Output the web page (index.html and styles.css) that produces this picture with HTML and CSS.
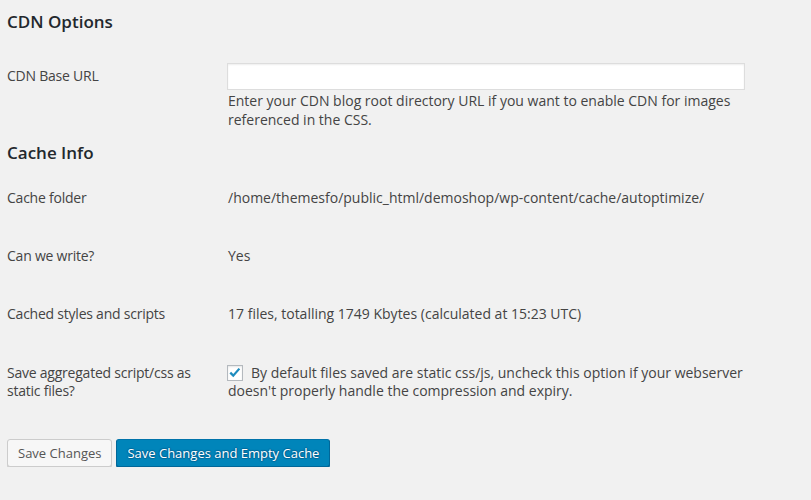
FILE: index.html
```html
<!DOCTYPE html>
<html>
<head>
<meta charset="utf-8">
<link rel="stylesheet" href="styles.css">
</head>
<body>
<div class="wrap">
  <h2 class="section-title first">CDN Options</h2>
  <table class="form-table">
    <tr>
      <th>CDN Base URL</th>
      <td class="input-cell">
        <span class="text-input"></span>
        <p class="description">Enter your CDN blog root directory URL if you want to enable CDN for images referenced in the CSS.</p>
      </td>
    </tr>
  </table>
  <h2 class="section-title">Cache Info</h2>
  <table class="form-table">
    <tr>
      <th>Cache folder</th>
      <td>/home/themesfo/public_html/demoshop/wp-content/cache/autoptimize/</td>
    </tr>
    <tr>
      <th>Can we write?</th>
      <td>Yes</td>
    </tr>
    <tr>
      <th>Cached styles and scripts</th>
      <td>17 files, totalling 1749 Kbytes (calculated at 15:23 UTC)</td>
    </tr>
    <tr>
      <th>Save aggregated script/css as static files?</th>
      <td><span class="checkbox"><svg viewBox="0 0 16 16" width="14" height="14"><path d="M2.6 7.6 L6 11 L13 3" fill="none" stroke="#1e8cbe" stroke-width="2.6" stroke-linecap="butt" stroke-linejoin="miter"/></svg></span>By default files saved are static css/js, uncheck this option if your webserver doesn't properly handle the compression and expiry.</td>
    </tr>
  </table>
  <div class="submit">
    <button class="button">Save Changes</button>
    <button class="button button-primary">Save Changes and Empty Cache</button>
  </div>
</div>
</body>
</html>
```
FILE: styles.css
```css
html, body {
  margin: 0;
  padding: 0;
  background: #f1f1f1;
}
body {
  font-family: "Open Sans", "Noto Sans", sans-serif;
  font-size: 14px;
  color: #444;
}
.wrap {
  padding: 0 0 0 7px;
}
.section-title {
  font-size: 17px;
  font-weight: 600;
  color: #23282d;
  line-height: 25px;
  margin: 0;
  padding: 0;
}
.section-title.first {
  margin-top: 8.5px;
  margin-bottom: 12px;
}
.section-title + .form-table {
  margin-top: 3.5px;
}
.form-table + .section-title {
  margin-top: 11px;
}
.form-table {
  border-collapse: collapse;
  border-spacing: 0;
}
.form-table th {
  width: 210px;
  padding: 21px 10px 19px 0;
  text-align: left;
  vertical-align: top;
  font-weight: 400;
  line-height: 18.2px;
  color: #444;
  letter-spacing: -0.23px;
}
.form-table td {
  width: 518px;
  padding: 21px 10px 19px 0;
  vertical-align: top;
  line-height: 18.2px;
}
.form-table td.input-cell {
  padding: 17px 0 0 0;
}
.text-input {
  display: block;
  width: 516px;
  height: 25px;
  background: #fff;
  border: 1px solid #ddd;
  box-shadow: inset 0 1px 2px rgba(0,0,0,.07);
}
.description {
  margin: 1px 0 0;
  line-height: 19px;
  padding-left: 1px;
}
.form-table td:not(.input-cell) {
  padding-left: 1px;
}
.checkbox {
  display: inline-block;
  box-sizing: border-box;
  width: 16px;
  height: 16px;
  border: 1px solid #b4b9be;
  background: #fff;
  box-shadow: inset 0 1px 2px rgba(0,0,0,.1);
  vertical-align: -3px;
  margin: 0 8px 0 -1px;
  position: relative;
}
.checkbox svg {
  position: absolute;
  left: 0;
  top: 0;
}
.submit {
  display: flex;
  gap: 4px;
  margin-top: 20px;
}
.button {
  font-family: "Open Sans", "Noto Sans", sans-serif;
  font-size: 13px;
  line-height: 26px;
  height: 28px;
  padding: 0 10px;
  border: 1px solid #ccc;
  border-radius: 3px;
  background: #f7f7f7;
  color: #555;
  box-shadow: 0 1px 0 #ccc;
  margin: 0;
}
.button-primary {
  background: #0085ba;
  border-color: #0073aa #006799 #006799;
  color: #fff;
  box-shadow: 0 1px 0 #006799;
  text-shadow: 0 -1px 1px #006799, 1px 0 1px #006799, 0 1px 1px #006799, -1px 0 1px #006799;
}
```
